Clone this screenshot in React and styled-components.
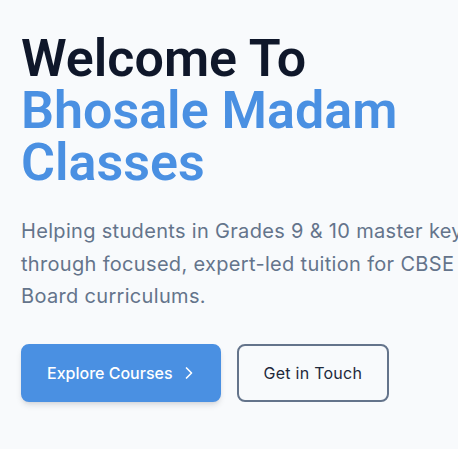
import React from "react";
import styled, { createGlobalStyle } from "styled-components";
import { ChevronRight } from "lucide-react";

const GlobalStyle = createGlobalStyle`
  html, body {
    margin: 0;
    padding: 0;
    background: #f8fafc;
    overflow: hidden;
  }
  body {
    font-family: "Inter", "Liberation Sans", sans-serif;
    -webkit-font-smoothing: antialiased;
  }
  * { box-sizing: border-box; }
`;

const Hero = styled.section`
  display: flex;
  flex-direction: column;
  align-items: flex-start;
  padding: 33px 0 0 21px;
  min-height: 449px;
  width: 640px;
`;

const Title = styled.h1`
  margin: 0;
  font-family: "Roboto", "Inter", sans-serif;
  font-weight: 600;
  font-size: 52px;
  line-height: 52px;
  letter-spacing: 0;
  color: #0f172a;
`;

const Accent = styled.span`
  display: block;
  color: #4a90e2;
`;

const Lead = styled.p`
  margin: 26px 0 0;
  font-size: 20px;
  line-height: 32.5px;
  letter-spacing: 0.32px;
  color: #64748b;
  white-space: nowrap;
`;

const Actions = styled.div`
  display: flex;
  align-items: center;
  gap: 16px;
  margin-top: 31px;
`;

const Button = styled.button`
  display: inline-flex;
  align-items: center;
  gap: 6px;
  height: 58px;
  padding: ${(p) => (p.$primary ? "0 20px 0 24px" : "0 25px")};
  border-radius: 8px;
  font-family: "Inter", sans-serif;
  font-size: 16px;
  line-height: 24px;
  cursor: pointer;
  border: 2px solid ${(p) => (p.$primary ? "#4a90e2" : "#64748b")};
  background: ${(p) => (p.$primary ? "#4a90e2" : "transparent")};
  color: ${(p) => (p.$primary ? "#ffffff" : "#1e293b")};
  font-weight: ${(p) => (p.$primary ? 500 : 400)};
  letter-spacing: ${(p) => (p.$primary ? "0" : "0.25px")};
  box-shadow: ${(p) =>
    p.$primary
      ? "0 4px 6px -1px rgba(15, 23, 42, 0.12), 0 2px 4px -2px rgba(15, 23, 42, 0.1)"
      : "none"};
`;

export default function App() {
  return (
    <>
      <GlobalStyle />
      <Hero>
        <Title>
          Welcome To
          <Accent>Bhosale Madam</Accent>
          <Accent>Classes</Accent>
        </Title>
        <Lead>
          Helping students in Grades 9 &amp; 10 master key concepts
          <br />
          through focused, expert-led tuition for CBSE and State
          <br />
          Board curriculums.
        </Lead>
        <Actions>
          <Button $primary>
            Explore Courses
            <ChevronRight size={20} strokeWidth={2} />
          </Button>
          <Button>Get in Touch</Button>
        </Actions>
      </Hero>
    </>
  );
}
